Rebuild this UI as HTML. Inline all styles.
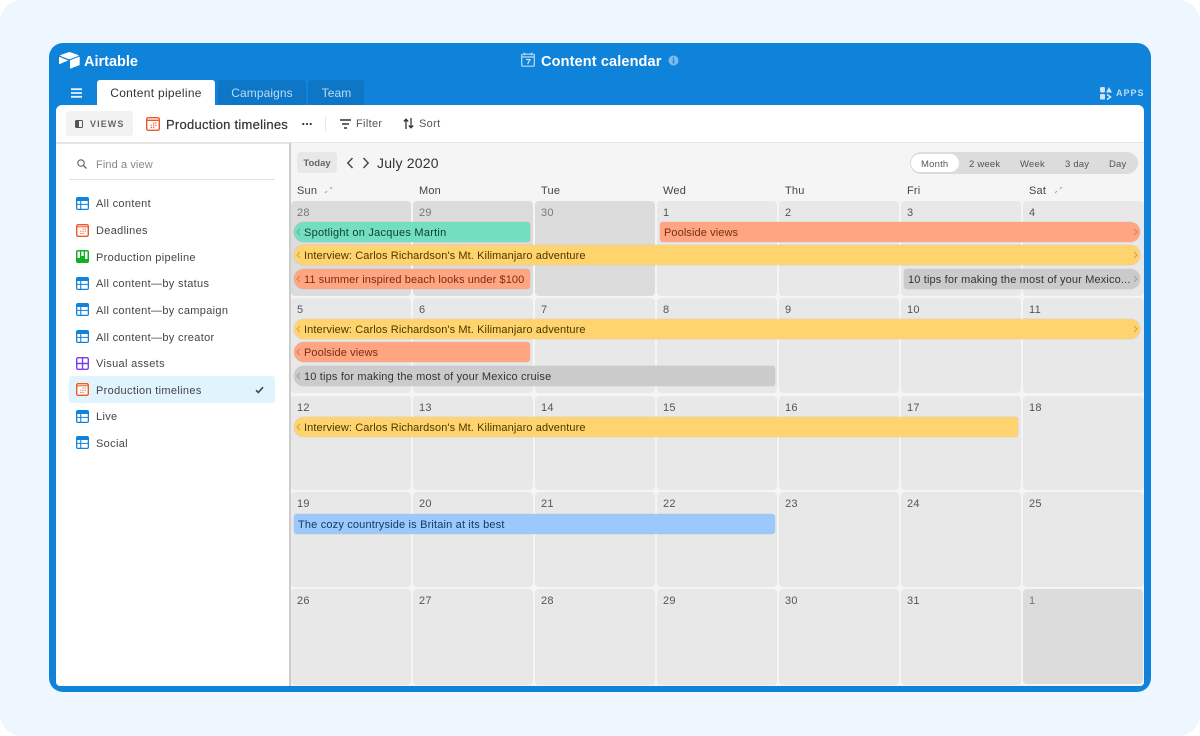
<!DOCTYPE html>
<html><head><meta charset="utf-8"><style>
*{box-sizing:border-box}
html,body{margin:0;padding:0;width:1200px;height:736px;overflow:hidden;background:#fff}
body{font-family:"Liberation Sans",sans-serif;position:relative}
#bg{position:absolute;left:0;top:0;width:1200px;height:736px;background:#eef6ff;border-radius:22px}
.a{position:absolute;white-space:nowrap}
#win{left:49px;top:43px;width:1102px;height:649px;background:#0f83da;border-radius:14px}
#panel{left:56px;top:105px;width:1088px;height:581px;background:#fff;border-radius:6px 6px 4px 4px;overflow:hidden}
#cal{left:289px;top:143px;width:855px;height:543px;background:#f5f5f5;border-left:2px solid #ccc;border-bottom-right-radius:4px;overflow:hidden}
.tab{height:25px;top:81px;font-size:12px;line-height:25px;text-align:center;border-radius:3px 3px 0 0;background:#0d76c6;color:#b9dcf5;letter-spacing:.1px}
.t{font-size:11px;color:#444;letter-spacing:.33px;line-height:14px}
.cell{position:absolute;background:#e8e8e8;border-radius:4px;font-size:11px;color:#555;padding:6px 0 0 6px;letter-spacing:.3px;line-height:13px}
.cell.o{background:#dcdcdc;color:#777}
.day{position:absolute;top:184px;font-size:11px;color:#444;letter-spacing:.2px;line-height:13px}
.bar{position:absolute;height:20px;border-radius:10px 3px 3px 10px;font-size:11px;line-height:22px;padding-left:10px;letter-spacing:.1px;white-space:nowrap;overflow:hidden;box-shadow:0 0 1px rgba(0,0,0,.25)}
.bar svg{position:absolute;top:6px}
.y{background:#ffd36e;color:#4a3800}.o2{background:#ffa581;color:#7a2d10}.g{background:#74dec0;color:#0b3f31}.k{background:#cbcbcb;color:#333}.b{background:#9cc8fb;color:#123a66}
.seg{position:absolute;top:159px;font-size:9.5px;color:#555;line-height:12px;letter-spacing:.2px}
</style></head><body>
<div id="bg"></div>
<div class="a" id="win"></div>

<!-- logo -->
<svg class="a" style="left:59px;top:52px" width="21" height="17" viewBox="0 0 21 17"><path fill="#fff" d="M9.300.3 1.500 3c-.5.2-.5.8 0 1l7.800 3c.7.300 1.400.300 2.100 0l7.800-3c.5-.2.5-.8 0-1L11.400.3c-.7-.3-1.400-.3-2.100 0z"/><path fill="#fff" d="M11 8.800v7.200c0 .4.400.6.700.5l8.500-3.300c.3-.1.500-.4.500-.7V5.300c0-.4-.4-.6-.7-.5l-8.500 3.300c-.3.100-.5.400-.5.700z"/><path fill="#fff" d="M9.300 8.500.9 5c-.4-.1-.9.100-.9.600v6c0 .3.200.5.400.6L5 10.300z"/></svg>
<div class="a" style="left:84px;top:53px;font-size:14.500px;line-height:18px;font-weight:bold;color:#fff;letter-spacing:0">Airtable</div>

<!-- title -->
<svg class="a" style="left:521px;top:52px" width="14" height="15" viewBox="0 0 14 15"><rect x=".7" y="2.200" width="12.600" height="12" rx="1" fill="none" stroke="#b9dcf5" stroke-width="1.200"/><path d="M.7 5h12.600M3.500.8v2.500M10.500.8v2.500" stroke="#b9dcf5" stroke-width="1.200"/><path d="M5 7.500h4L6.600 12" fill="none" stroke="#d6ecfb" stroke-width="1.100"/></svg>
<div class="a" style="left:541px;top:53px;font-size:14.500px;line-height:18px;font-weight:bold;color:#fff;letter-spacing:.13px">Content calendar</div>
<svg class="a" style="left:668px;top:55px" width="11" height="11" viewBox="0 0 11 11"><circle cx="5.500" cy="5.500" r="5" fill="#7dbcea"/><rect x="4.800" y="4.600" width="1.400" height="4" fill="#0f83da"/><rect x="4.800" y="2.400" width="1.400" height="1.400" fill="#0f83da"/></svg>

<!-- tabs row -->
<svg class="a" style="left:71px;top:88px" width="11" height="10" viewBox="0 0 11 10"><path d="M0 1.200h11M0 5h11M0 8.800h11" stroke="#e2f1fc" stroke-width="1.800"/></svg>
<div class="a tab" style="left:97px;width:118px;top:80px;height:26px;line-height:26px;background:#fff;color:#333;letter-spacing:.3px">Content pipeline</div>
<div class="a tab" style="left:218px;width:88px;top:80px;height:26px;line-height:26px;">Campaigns</div>
<div class="a tab" style="left:308px;width:56px;top:80px;height:26px;line-height:26px;padding-left:1px">Team</div>
<svg class="a" style="left:1100px;top:87px" width="12" height="13" viewBox="0 0 12 13"><rect x="0" y="0" width="5" height="5.500" rx="1.500" fill="#cfe6f8"/><path d="M9 0 12 5.500H6z" fill="#cfe6f8"/><rect x="0" y="7" width="5" height="5.500" rx="1" fill="#cfe6f8"/><path d="M7 7.500l3.500 2.500L7 12.500" fill="none" stroke="#cfe6f8" stroke-width="1.600"/></svg>
<div class="a" style="left:1116px;top:88px;font-size:9px;line-height:11px;font-weight:bold;color:#b9dcf5;letter-spacing:1px">APPS</div>

<div class="a" id="panel"></div>

<!-- toolbar -->
<div class="a" style="left:66px;top:111px;width:67px;height:25px;background:#f2f2f2;border-radius:3px"></div>
<svg class="a" style="left:75px;top:120px" width="8" height="8" viewBox="0 0 8 8"><rect x=".5" y=".5" width="7" height="7" rx="1" fill="none" stroke="#555"/><rect x=".5" y=".5" width="3.500" height="7" fill="#555"/></svg>
<div class="a" style="left:90px;top:119px;font-size:9px;line-height:11px;font-weight:bold;color:#666;letter-spacing:1.100px">VIEWS</div>
<svg class="a" style="left:146px;top:117px" width="14" height="14" viewBox="0 0 14 14"><rect x=".7" y=".7" width="12.600" height="12.600" rx="1.600" fill="#fff" stroke="#f0562a" stroke-width="1.400"/><path d="M.7 3.300h12.600" stroke="#f0562a" stroke-width="1.400"/><path d="M7 5.500h1.200v1.200H7zM9.300 5.500h1.200v1.200H9.300zM4.700 7.700h1.200v1.200H4.700zM7 7.700h1.200v1.200H7zM9.300 7.700h1.200v1.200H9.300zM4.700 9.900h1.200v1.200H4.700zM7 9.900h1.200v1.200H7z" fill="#f0562a"/></svg>
<div class="a" style="left:166px;top:116px;font-size:13px;line-height:17px;color:#333;letter-spacing:.25px;-webkit-text-stroke:.2px #333">Production timelines</div>
<svg class="a" style="left:302px;top:122px" width="10" height="4" viewBox="0 0 10 4"><circle cx="1.300" cy="2" r="1.100" fill="#333"/><circle cx="5" cy="2" r="1.100" fill="#333"/><circle cx="8.700" cy="2" r="1.100" fill="#333"/></svg>
<div class="a" style="left:325px;top:116px;width:1px;height:16px;background:#e8e8e8"></div>
<svg class="a" style="left:340px;top:119px" width="11" height="10" viewBox="0 0 11 10"><path d="M0 1h11M2 5h7M4 9h3" stroke="#333" stroke-width="1.500"/></svg>
<div class="a t" style="left:356px;top:117px;color:#555">Filter</div>
<svg class="a" style="left:403px;top:118px" width="11" height="11" viewBox="0 0 11 11"><path d="M3 11V1.500M.8 3.500 3 1.200l2.200 2.300M8 0v9.500M5.800 7.500 8 9.800l2.200-2.300" fill="none" stroke="#333" stroke-width="1.300"/></svg>
<div class="a t" style="left:419px;top:117px;color:#555">Sort</div>
<div class="a" style="left:56px;top:142px;width:1088px;height:2px;background:#e6e6e6"></div>

<!-- sidebar -->
<svg class="a" style="left:77px;top:159px" width="10" height="10" viewBox="0 0 10 10"><circle cx="4" cy="4" r="3.200" fill="none" stroke="#666" stroke-width="1.200"/><path d="M6.500 6.500 9.500 9.500" stroke="#666" stroke-width="1.300"/></svg>
<div class="a t" style="left:96px;top:158px;color:#888;letter-spacing:.1px;line-height:15px">Find a view</div>
<div class="a" style="left:69px;top:179px;width:206px;height:1px;background:#e2e2e2"></div>
<div class="a" style="left:69px;top:376px;width:206px;height:27px;background:#e0f4fe;border-radius:3px"></div>

<svg width="0" height="0" style="position:absolute"><defs>
<g id="grid"><rect width="13" height="13" rx="2" fill="#1283da"/><path d="M1.300 4h2.900v2.900H1.300zM5.300 4h6.400v2.900H5.300zM1.300 7.900h2.900v3.800H1.300zM5.300 7.900h6.400v3.800H5.300z" fill="#fff"/></g>
<g id="cal"><rect x=".7" y=".7" width="11.600" height="11.600" rx="1.500" fill="#fff" stroke="#f0562a" stroke-width="1.400"/><path d="M1 2.800h11" stroke="#f0562a" stroke-width="1"/><path d="M6.500 4.500h1.100v1.100H6.500zM8.700 4.500h1.100v1.100H8.700zM4.300 6.700h1.100v1.100H4.300zM6.500 6.700h1.100v1.100H6.500zM8.700 6.700h1.100v1.100H8.700zM4.300 8.900h1.100v1.100H4.300zM6.500 8.900h1.100v1.100H6.500z" fill="#f0562a"/></g>
<g id="kan"><rect width="13" height="13" rx="2" fill="#11af22"/><path d="M1.500 1.500h2.500V8H1.500zM5.300 1.500h2.400V6H5.300zM9 1.500h2.500V9H9z" fill="#fff"/></g>
<g id="gal"><rect x=".7" y=".7" width="11.600" height="11.600" rx="1.500" fill="#fff" stroke="#7c39ed" stroke-width="1.400"/><path d="M6.500 1v11M1 6.500h11" stroke="#7c39ed" stroke-width="1.400"/></g>
</defs></svg>

<svg class="a" style="left:76px;top:197px" width="13" height="13"><use href="#grid"/></svg><div class="a t" style="left:96px;top:197px">All content</div>
<svg class="a" style="left:76px;top:224px" width="13" height="13"><use href="#cal"/></svg><div class="a t" style="left:96px;top:224px">Deadlines</div>
<svg class="a" style="left:76px;top:250px" width="13" height="13"><use href="#kan"/></svg><div class="a t" style="left:96px;top:251px">Production pipeline</div>
<svg class="a" style="left:76px;top:277px" width="13" height="13"><use href="#grid"/></svg><div class="a t" style="left:96px;top:277px">All content—by status</div>
<svg class="a" style="left:76px;top:303px" width="13" height="13"><use href="#grid"/></svg><div class="a t" style="left:96px;top:304px">All content—by campaign</div>
<svg class="a" style="left:76px;top:330px" width="13" height="13"><use href="#grid"/></svg><div class="a t" style="left:96px;top:331px">All content—by creator</div>
<svg class="a" style="left:76px;top:357px" width="13" height="13"><use href="#gal"/></svg><div class="a t" style="left:96px;top:357px">Visual assets</div>
<svg class="a" style="left:76px;top:383px" width="13" height="13"><use href="#cal"/></svg><div class="a t" style="left:96px;top:384px">Production timelines</div>
<svg class="a" style="left:255px;top:386px" width="9" height="8" viewBox="0 0 9 8"><path d="M1 4.200 3.300 6.500 8 1.200" fill="none" stroke="#444" stroke-width="1.600"/></svg>
<svg class="a" style="left:76px;top:410px" width="13" height="13"><use href="#grid"/></svg><div class="a t" style="left:96px;top:410px">Live</div>
<svg class="a" style="left:76px;top:436px" width="13" height="13"><use href="#grid"/></svg><div class="a t" style="left:96px;top:437px">Social</div>

<!-- calendar -->
<div class="a" id="cal"></div>
<div class="a" style="left:297px;top:152px;width:40px;height:21px;background:#e8e8e8;border-radius:4px;font-size:9.500px;line-height:23px;text-align:center;color:#666;font-weight:bold">Today</div>
<svg class="a" style="left:346px;top:157px" width="8" height="12" viewBox="0 0 8 12"><path d="M6.500 1 1.800 6l4.700 5" fill="none" stroke="#444" stroke-width="1.400"/></svg>
<svg class="a" style="left:362px;top:157px" width="8" height="12" viewBox="0 0 8 12"><path d="M1.500 1 6.200 6l-4.700 5" fill="none" stroke="#444" stroke-width="1.400"/></svg>
<div class="a" style="left:377px;top:154px;font-size:14px;line-height:18px;color:#333;letter-spacing:.2px">July 2020</div>

<div class="a" style="left:910px;top:152px;width:228px;height:22px;background:#dcdcdc;border-radius:11px"></div>
<div class="a" style="left:911px;top:154px;width:48px;height:18px;background:#fff;border-radius:9px"></div>
<div class="seg" style="left:921px">Month</div>
<div class="seg" style="left:969px">2 week</div>
<div class="seg" style="left:1020px">Week</div>
<div class="seg" style="left:1065px">3 day</div>
<div class="seg" style="left:1109px">Day</div>

<div class="day" style="left:297px;top:185px">Sun</div>
<svg class="a" style="left:324px;top:186px" width="9" height="8" viewBox="0 0 9 8"><path d="M1 7 3 5M6 3l2-2" stroke="#aaa" stroke-width="1.200"/></svg>
<div class="day" style="left:419px;top:185px">Mon</div>
<div class="day" style="left:541px;top:185px">Tue</div>
<div class="day" style="left:663px;top:185px">Wed</div>
<div class="day" style="left:785px;top:185px">Thu</div>
<div class="day" style="left:907px;top:185px">Fri</div>
<div class="day" style="left:1029px;top:185px">Sat</div>
<svg class="a" style="left:1054px;top:186px" width="9" height="8" viewBox="0 0 9 8"><path d="M1 7 3 5M6 3l2-2" stroke="#aaa" stroke-width="1.200"/></svg>

<!-- row 1 -->
<div class="cell o" style="left:291px;top:201px;width:120px;height:95px">28</div>
<div class="cell o" style="left:413px;top:201px;width:120px;height:95px">29</div>
<div class="cell o" style="left:535px;top:201px;width:120px;height:95px">30</div>
<div class="cell" style="left:657px;top:201px;width:120px;height:95px">1</div>
<div class="cell" style="left:779px;top:201px;width:120px;height:95px">2</div>
<div class="cell" style="left:901px;top:201px;width:120px;height:95px">3</div>
<div class="cell" style="left:1023px;top:201px;width:121px;height:95px">4</div>
<!-- row 2 -->
<div class="cell" style="left:291px;top:298px;width:120px;height:95px">5</div>
<div class="cell" style="left:413px;top:298px;width:120px;height:95px">6</div>
<div class="cell" style="left:535px;top:298px;width:120px;height:95px">7</div>
<div class="cell" style="left:657px;top:298px;width:120px;height:95px">8</div>
<div class="cell" style="left:779px;top:298px;width:120px;height:95px">9</div>
<div class="cell" style="left:901px;top:298px;width:120px;height:95px">10</div>
<div class="cell" style="left:1023px;top:298px;width:121px;height:95px">11</div>
<!-- row 3 -->
<div class="cell" style="left:291px;top:396px;width:120px;height:94px">12</div>
<div class="cell" style="left:413px;top:396px;width:120px;height:94px">13</div>
<div class="cell" style="left:535px;top:396px;width:120px;height:94px">14</div>
<div class="cell" style="left:657px;top:396px;width:120px;height:94px">15</div>
<div class="cell" style="left:779px;top:396px;width:120px;height:94px">16</div>
<div class="cell" style="left:901px;top:396px;width:120px;height:94px">17</div>
<div class="cell" style="left:1023px;top:396px;width:121px;height:94px">18</div>
<!-- row 4 -->
<div class="cell" style="left:291px;top:492px;width:120px;height:95px">19</div>
<div class="cell" style="left:413px;top:492px;width:120px;height:95px">20</div>
<div class="cell" style="left:535px;top:492px;width:120px;height:95px">21</div>
<div class="cell" style="left:657px;top:492px;width:120px;height:95px">22</div>
<div class="cell" style="left:779px;top:492px;width:120px;height:95px">23</div>
<div class="cell" style="left:901px;top:492px;width:120px;height:95px">24</div>
<div class="cell" style="left:1023px;top:492px;width:121px;height:95px">25</div>
<!-- row 5 -->
<div class="cell" style="left:291px;top:589px;width:120px;height:96px">26</div>
<div class="cell" style="left:413px;top:589px;width:120px;height:96px">27</div>
<div class="cell" style="left:535px;top:589px;width:120px;height:96px">28</div>
<div class="cell" style="left:657px;top:589px;width:120px;height:96px">29</div>
<div class="cell" style="left:779px;top:589px;width:120px;height:96px">30</div>
<div class="cell" style="left:901px;top:589px;width:120px;height:96px">31</div>
<div class="cell o" style="left:1023px;top:589px;width:120px;height:95px">1</div>

<svg width="0" height="0" style="position:absolute"><defs>
<path id="l" d="M4 1 1 4l3 3" fill="none" stroke="#000" stroke-opacity=".2" stroke-width="1.200"/>
<path id="r" d="M1 1l3 3-3 3" fill="none" stroke="#000" stroke-opacity=".2" stroke-width="1.200"/>
</defs></svg>

<div class="bar g" style="left:294px;top:222px;width:236px;letter-spacing:.25px"><svg style="left:2px" width="5" height="8"><use href="#l"/></svg>Spotlight on Jacques Martin</div>
<div class="bar o2" style="left:660px;top:222px;width:480px;border-radius:3px 10px 10px 3px;padding-left:4px"><svg style="right:2px" width="5" height="8"><use href="#r"/></svg>Poolside views</div>
<div class="bar y" style="left:294px;top:245px;width:846px;border-radius:10px"><svg style="left:2px" width="5" height="8"><use href="#l"/></svg><svg style="right:2px" width="5" height="8"><use href="#r"/></svg>Interview: Carlos Richardson's Mt. Kilimanjaro adventure</div>
<div class="bar o2" style="left:294px;top:269px;width:236px"><svg style="left:2px" width="5" height="8"><use href="#l"/></svg>11 summer inspired beach looks under $100</div>
<div class="bar k" style="left:904px;top:269px;width:236px;border-radius:3px 10px 10px 3px;padding-left:4px;letter-spacing:.15px"><svg style="right:2px" width="5" height="8"><use href="#r"/></svg>10 tips for making the most of your Mexico...</div>

<div class="bar y" style="left:294px;top:319px;width:846px;border-radius:10px"><svg style="left:2px" width="5" height="8"><use href="#l"/></svg><svg style="right:2px" width="5" height="8"><use href="#r"/></svg>Interview: Carlos Richardson's Mt. Kilimanjaro adventure</div>
<div class="bar o2" style="left:294px;top:342px;width:236px"><svg style="left:2px" width="5" height="8"><use href="#l"/></svg>Poolside views</div>
<div class="bar k" style="left:294px;top:366px;width:481px;letter-spacing:.17px"><svg style="left:2px" width="5" height="8"><use href="#l"/></svg>10 tips for making the most of your Mexico cruise</div>

<div class="bar y" style="left:294px;top:417px;width:724px"><svg style="left:2px" width="5" height="8"><use href="#l"/></svg>Interview: Carlos Richardson's Mt. Kilimanjaro adventure</div>

<div class="bar b" style="left:294px;top:514px;width:481px;border-radius:3px;padding-left:4px;letter-spacing:.17px">The cozy countryside is Britain at its best</div>
</body></html>
